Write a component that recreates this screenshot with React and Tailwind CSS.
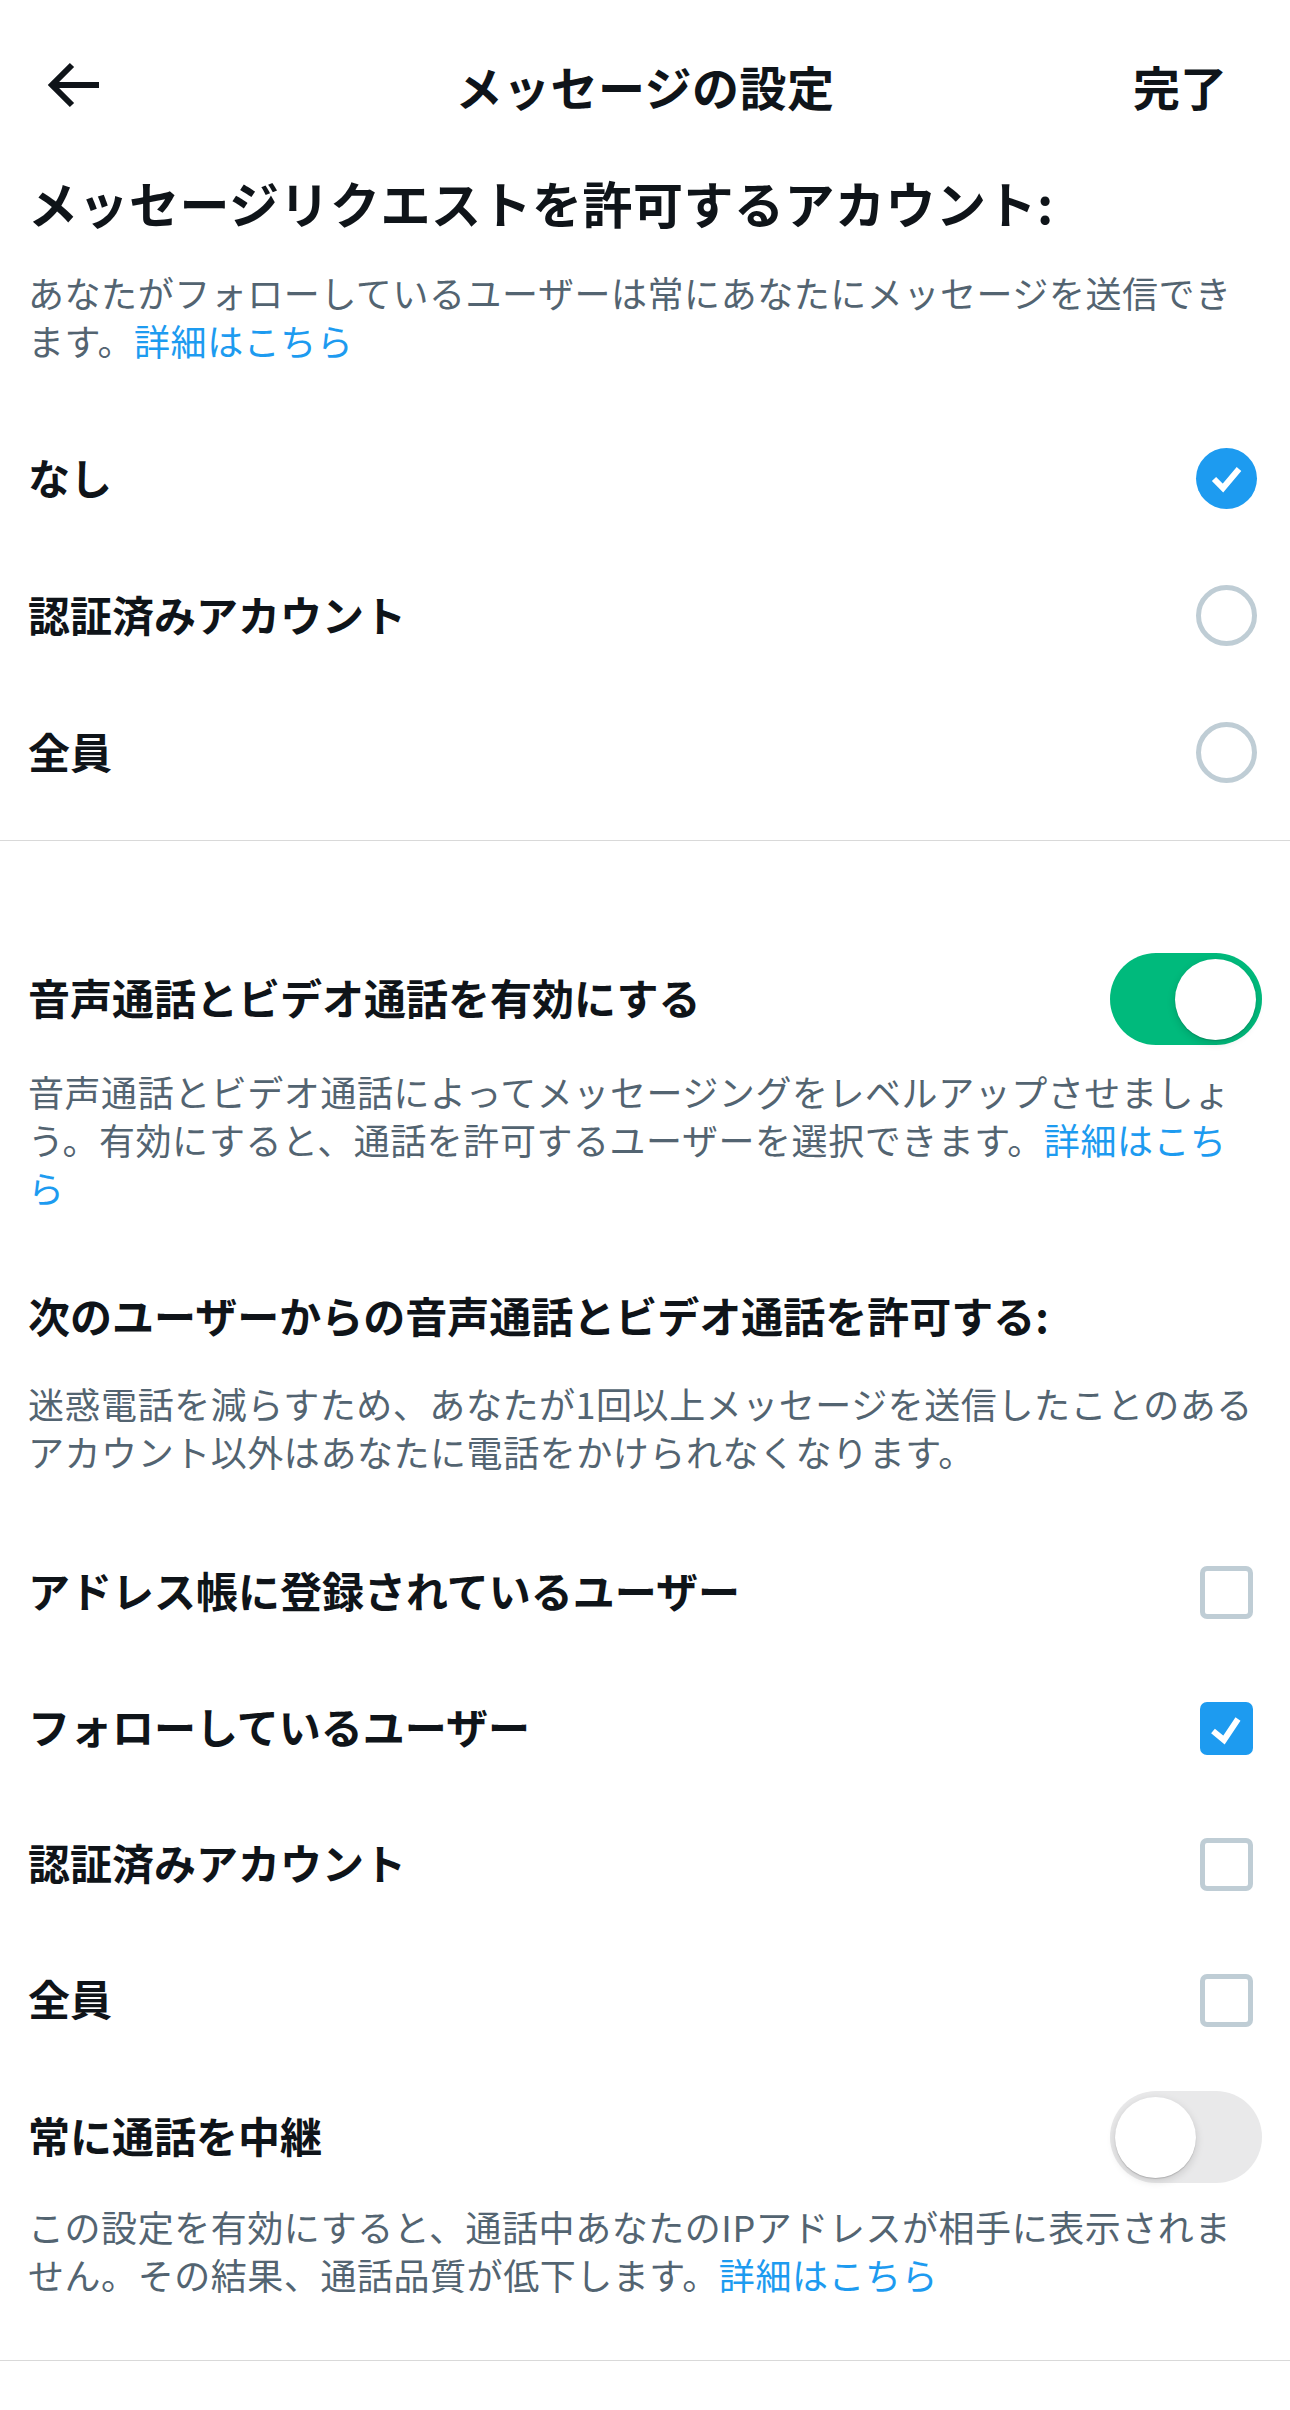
import { useState } from "react";

const LINK = "text-[#1d9bf0]";
const DESC = "px-[28px] text-[36px] leading-[48px] tracking-[0.55px] text-[#536471] whitespace-nowrap";

function BackArrow() {
  return (
    <svg width="56" height="48" viewBox="0 0 56 48" fill="none">
      <path d="M54 24H6" stroke="#0f1419" strokeWidth="6" />
      <path d="M27 4L7 24L27 44" stroke="#0f1419" strokeWidth="6" strokeLinejoin="miter" />
    </svg>
  );
}

function Radio({ checked }) {
  if (checked) {
    return (
      <div className="w-[61px] h-[61px] rounded-full bg-[#1d9bf0] flex items-center justify-center">
        <svg width="61" height="61" viewBox="0 0 61 61" fill="none">
          <path d="M18 31L27 40L43 21" stroke="white" strokeWidth="6" />
        </svg>
      </div>
    );
  }
  return <div className="w-[61px] h-[61px] rounded-full border-[5px] border-[#bfcdd5]" />;
}

function Checkbox({ checked }) {
  if (checked) {
    return (
      <div className="w-[53px] h-[53px] rounded-[7px] bg-[#1d9bf0]">
        <svg width="53" height="53" viewBox="0 0 53 53" fill="none">
          <path d="M13 29L24 38L38 17" stroke="white" strokeWidth="6" />
        </svg>
      </div>
    );
  }
  return <div className="w-[53px] h-[53px] rounded-[7px] border-[5px] border-[#bfcdd5]" />;
}

function Toggle({ on, onClick }) {
  return (
    <button
      type="button"
      onClick={onClick}
      className={
        on
          ? "w-[152px] h-[92px] rounded-full bg-[#00ba7c] flex items-center justify-end p-[6px]"
          : "w-[152px] h-[92px] rounded-full bg-[#e9e9ea] flex items-center justify-start p-[5px]"
      }
    >
      <span className="block w-[81px] h-[81px] rounded-full bg-white shadow-[0_3px_8px_rgba(0,0,0,0.15),0_1px_1px_rgba(0,0,0,0.16)]" />
    </button>
  );
}

export default function App() {
  const [who, setWho] = useState("none");
  const [callsOn, setCallsOn] = useState(true);
  const [relay, setRelay] = useState(false);
  const [callers, setCallers] = useState({
    contacts: false,
    following: true,
    verified: false,
    everyone: false,
  });

  const radios = [
    { id: "none", label: "なし" },
    { id: "verified", label: "認証済みアカウント" },
    { id: "everyone", label: "全員" },
  ];

  const boxes = [
    { id: "contacts", label: "アドレス帳に登録されているユーザー" },
    { id: "following", label: "フォローしているユーザー" },
    { id: "verified", label: "認証済みアカウント" },
    { id: "everyone", label: "全員" },
  ];

  return (
    <div className="w-[1290px] min-h-[2410px] bg-white text-[#0f1419] font-['Noto_Sans_CJK_JP','Noto_Sans',sans-serif]">
      {/* ヘッダー */}
      <div className="h-[170px] grid grid-cols-[1fr_auto_1fr] items-center">
        <div className="pl-[45px] flex items-center">
          <BackArrow />
        </div>
        <div className="text-[47px] font-bold leading-none tracking-[0.5px]">メッセージの設定</div>
        <div className="flex justify-end pr-[63px] text-[47px] font-bold leading-none">完了</div>
      </div>

      <h1 className="px-[28px] text-[50px] leading-[64px] tracking-[0.5px] font-bold">
        メッセージリクエストを許可するアカウント:
      </h1>
      <p className={"mt-[34px] " + DESC}>
        あなたがフォローしているユーザーは常にあなたにメッセージを送信でき
        <br />
        ます。<span className={LINK}>詳細はこちら</span>
      </p>

      <div className="mt-[46px]">
        {radios.map((r) => (
          <div
            key={r.id}
            onClick={() => setWho(r.id)}
            className="h-[137px] px-[28px] flex items-center justify-between cursor-pointer"
          >
            <span className="text-[42px] font-bold leading-[56px] -mt-[4px]">{r.label}</span>
            <div className="w-[72px] flex justify-center">
              <Radio checked={who === r.id} />
            </div>
          </div>
        ))}
      </div>

      <div className="mt-[19px] h-px bg-[#d9d9d9]" />

      <div className="mt-[112px] h-[92px] px-[28px] flex items-center justify-between">
        <span className="text-[42px] font-bold leading-[56px] -mt-[4px]">音声通話とビデオ通話を有効にする</span>
        <Toggle on={callsOn} onClick={() => setCallsOn(!callsOn)} />
      </div>
      <p className={"mt-[22px] " + DESC}>
        音声通話とビデオ通話によってメッセージングをレベルアップさせましょ
        <br />
        う。有効にすると、通話を許可するユーザーを選択できます。<span className={LINK}>詳細はこち</span>
        <br />
        <span className={LINK}>ら</span>
      </p>

      <h2 className="mt-[76px] px-[28px] text-[42px] leading-[56px] font-bold">
        次のユーザーからの音声通話とビデオ通話を許可する:
      </h2>
      <p className={"mt-[36px] " + DESC}>
        迷惑電話を減らすため、あなたが1回以上メッセージを送信したことのある
        <br />
        アカウント以外はあなたに電話をかけられなくなります。
      </p>

      <div className="mt-[49px]">
        {boxes.map((b) => (
          <div
            key={b.id}
            onClick={() => setCallers({ ...callers, [b.id]: !callers[b.id] })}
            className="h-[136px] px-[28px] flex items-center justify-between cursor-pointer"
          >
            <span className="text-[42px] font-bold leading-[56px] -mt-[4px]">{b.label}</span>
            <div className="w-[72px] flex justify-center">
              <Checkbox checked={callers[b.id]} />
            </div>
          </div>
        ))}
      </div>

      <div className="mt-[23px] h-[92px] px-[28px] flex items-center justify-between">
        <span className="text-[42px] font-bold leading-[56px] -mt-[4px]">常に通話を中継</span>
        <Toggle on={relay} onClick={() => setRelay(!relay)} />
      </div>
      <p className={"mt-[19px] " + DESC}>
        この設定を有効にすると、通話中あなたのIPアドレスが相手に表示されま
        <br />
        せん。その結果、通話品質が低下します。<span className={LINK}>詳細はこちら</span>
      </p>

      <div className="mt-[62px] h-px bg-[#d9d9d9]" />
    </div>
  );
}
